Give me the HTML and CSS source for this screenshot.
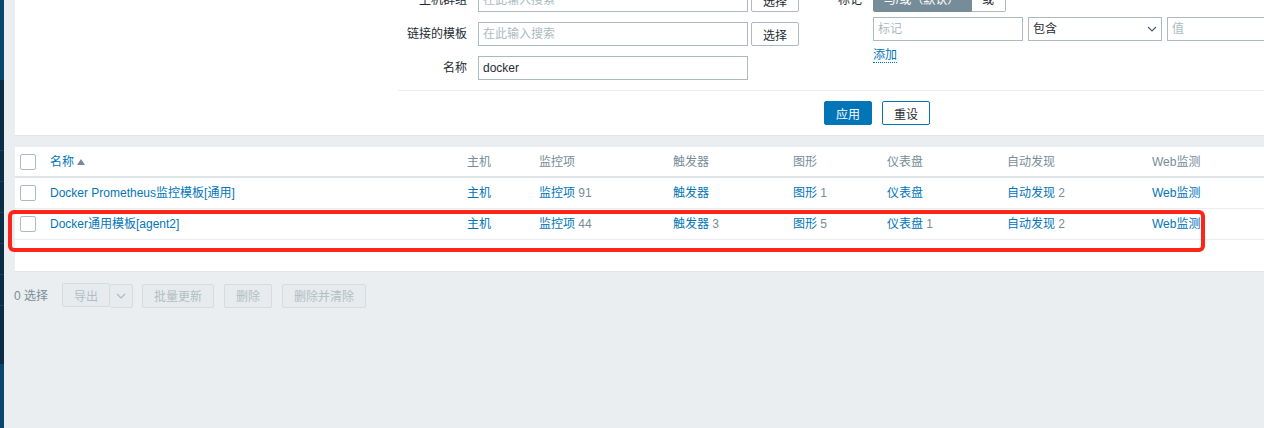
FILE: index.html
```html
<!DOCTYPE html>
<html lang="zh-CN">
<head>
    <meta charset="UTF-8">
    <meta name="viewport" content="width=device-width, initial-scale=1.0">
    <title>模板</title>
    <link rel="stylesheet" href="styles.css">
</head>
<body>
    <div class="layout">
        <aside class="sidebar">
            <div class="sidebar-menu">
                <span class="menu-spacer"></span>
                <span class="menu-item"></span>
                <span class="menu-item"></span>
                <span class="menu-item"></span>
                <span class="menu-item"></span>
                <span class="menu-item"></span>
                <span class="menu-item"></span>
            </div>
        </aside>

        <main class="content">
            <!-- Filter -->
            <section class="filter">
                <div class="filter-form">
                    <div class="filter-cols">
                        <div class="filter-col">
                            <div class="form-row">
                                <label class="form-label">主机群组</label>
                                <input class="text-input" type="text" placeholder="在此输入搜索">
                                <button class="btn-grey">选择</button>
                            </div>
                            <div class="form-row">
                                <label class="form-label">链接的模板</label>
                                <input class="text-input" type="text" placeholder="在此输入搜索">
                                <button class="btn-grey">选择</button>
                            </div>
                            <div class="form-row">
                                <label class="form-label">名称</label>
                                <input class="text-input" type="text" value="docker">
                            </div>
                        </div>

                        <div class="filter-col tags-col">
                            <div class="form-row">
                                <label class="form-label tag-label">标记</label>
                                <div class="segmented">
                                    <span class="segment active">与/或（默认）</span>
                                    <span class="segment">或</span>
                                </div>
                            </div>
                            <div class="tag-row">
                                <input class="text-input tag-input" type="text" placeholder="标记">
                                <div class="select">
                                    <span>包含</span>
                                    <svg width="10" height="6" viewBox="0 0 10 6"><path d="M1 1 L5 5 L9 1" fill="none" stroke="#4f5f68" stroke-width="1.2"/></svg>
                                </div>
                                <input class="text-input tag-input" type="text" placeholder="值">
                            </div>
                            <a class="link-add" href="#">添加</a>
                        </div>
                    </div>

                    <div class="filter-buttons">
                        <button class="btn-apply">应用</button>
                        <button class="btn-alt">重设</button>
                    </div>
                </div>
            </section>

            <!-- Template list -->
            <section class="list">
                <table class="list-table">
                    <colgroup>
                        <col style="width: 30px">
                        <col style="width: 417px">
                        <col style="width: 72px">
                        <col style="width: 134px">
                        <col style="width: 120px">
                        <col style="width: 94px">
                        <col style="width: 120px">
                        <col style="width: 145px">
                        <col>
                    </colgroup>
                    <thead>
                        <tr>
                            <th><span class="checkbox"></span></th>
                            <th><a href="#" class="sort-link">名称</a><span class="arrow-up"></span></th>
                            <th>主机</th>
                            <th>监控项</th>
                            <th>触发器</th>
                            <th>图形</th>
                            <th>仪表盘</th>
                            <th>自动发现</th>
                            <th>Web监测</th>
                        </tr>
                    </thead>
                    <tbody>
                        <tr>
                            <td><span class="checkbox"></span></td>
                            <td><a href="#">Docker Prometheus监控模板[通用]</a></td>
                            <td><a href="#">主机</a></td>
                            <td><a href="#">监控项</a> <span class="count">91</span></td>
                            <td><a href="#">触发器</a></td>
                            <td><a href="#">图形</a> <span class="count">1</span></td>
                            <td><a href="#">仪表盘</a></td>
                            <td><a href="#">自动发现</a> <span class="count">2</span></td>
                            <td><a href="#">Web监测</a></td>
                        </tr>
                        <tr>
                            <td><span class="checkbox"></span></td>
                            <td><a href="#">Docker通用模板[agent2]</a></td>
                            <td><a href="#">主机</a></td>
                            <td><a href="#">监控项</a> <span class="count">44</span></td>
                            <td><a href="#">触发器</a> <span class="count">3</span></td>
                            <td><a href="#">图形</a> <span class="count">5</span></td>
                            <td><a href="#">仪表盘</a> <span class="count">1</span></td>
                            <td><a href="#">自动发现</a> <span class="count">2</span></td>
                            <td><a href="#">Web监测</a></td>
                        </tr>
                    </tbody>
                </table>
                <div class="highlight"></div>
            </section>

            <!-- Mass actions -->
            <div class="actions">
                <span class="selected-count">0 选择</span>
                <div class="btn-split">
                    <button class="btn-disabled btn-w48">导出</button>
                    <button class="btn-disabled btn-toggle">
                        <svg width="10" height="6" viewBox="0 0 10 6"><path d="M1 1 L5 5 L9 1" fill="none" stroke="#acbbc2" stroke-width="1.2"/></svg>
                    </button>
                </div>
                <button class="btn-disabled btn-w72">批量更新</button>
                <button class="btn-disabled btn-w48">删除</button>
                <button class="btn-disabled btn-w84">删除并清除</button>
            </div>
        </main>
    </div>
</body>
</html>
```

FILE: styles.css
```css
:root {
    --bg: #ebeef0;
    --panel-border: #dfe4e7;
    --text: #1f2c33;
    --muted: #768d99;
    --link: #0275b8;
    --input-border: #acbbc2;
    --sidebar: #0a466a;
    --sidebar-dark: #0b2c43;
}

html, body {
    overflow: hidden;
}

body {
    margin: 0;
    padding: 0;
    background-color: var(--bg);
    color: var(--text);
    font-family: "Liberation Sans", Arial, "Noto Sans CJK SC", sans-serif;
    font-size: 12px;
    line-height: 14px;
}

a {
    color: var(--link);
    text-decoration: none;
}

button {
    font-family: inherit;
    font-size: 12px;
}

.layout {
    display: flex;
    min-height: 100vh;
}

/* Sidebar edge */
.sidebar {
    width: 4px;
    flex-shrink: 0;
    background-color: var(--sidebar);
}

.sidebar-menu {
    margin-top: 80px;
    background-color: var(--sidebar-dark);
    display: flex;
    flex-direction: column;
    padding-bottom: 28px;
}

.menu-spacer {
    height: 70px;
}

.menu-item {
    height: 30px;
    border-top: 1px solid #173f5c;
}

.content {
    flex: 1;
    min-width: 0;
    padding-left: 11px;
}

/* Filter */
.filter {
    margin-top: -22px;
    padding: 10px 0 10px 0;
    background-color: #fff;
    border-bottom: 1px solid var(--panel-border);
    overflow: hidden;
}

.filter-form {
    margin-left: 383px;
}

.filter-cols {
    display: flex;
    padding-bottom: 10px;
}

.filter-col {
    display: flex;
    flex-direction: column;
    gap: 10px;
    width: 422px;
    flex-shrink: 0;
}

.tags-col {
    gap: 0;
    width: 520px;
}

.form-row {
    display: flex;
    align-items: center;
    height: 24px;
}

.form-label {
    width: 69px;
    margin-right: 11px;
    text-align: right;
    flex-shrink: 0;
}

.tag-label {
    width: 42px;
}

.text-input {
    box-sizing: border-box;
    width: 270px;
    height: 24px;
    padding: 0 4px;
    border: 1px solid var(--input-border);
    border-radius: 0;
    font-family: inherit;
    font-size: 12px;
    color: var(--text);
    outline: none;
    flex-shrink: 0;
}

.text-input::placeholder {
    color: var(--input-border);
}

.btn-grey {
    box-sizing: border-box;
    height: 24px;
    width: 48px;
    margin-left: 3px;
    background-color: #fff;
    border: 1px solid var(--input-border);
    border-radius: 2px;
    color: var(--text);
    padding: 0;
}

.segmented {
    display: flex;
    height: 24px;
}

.segment {
    box-sizing: border-box;
    height: 24px;
    line-height: 22px;
    border: 1px solid var(--input-border);
    padding: 0 10px;
    background-color: #fff;
}

.segment.active {
    width: 99px;
    background-color: var(--muted);
    border-color: var(--muted);
    color: #fff;
    border-radius: 2px 0 0 2px;
}

.segment:last-child {
    width: 34px;
    border-left: none;
    border-radius: 0 2px 2px 0;
}

.tag-row {
    display: flex;
    gap: 5px;
    margin: 5px 0 0 53px;
}

.tag-input {
    width: 150px;
}

.select {
    box-sizing: border-box;
    width: 134px;
    height: 24px;
    border: 1px solid var(--input-border);
    padding: 0 4px;
    display: flex;
    align-items: center;
    justify-content: space-between;
    flex-shrink: 0;
}

.link-add {
    align-self: flex-start;
    margin: 7px 0 0 53px;
    border-bottom: 1px dotted var(--link);
    line-height: 14px;
}

.filter-buttons {
    border-top: 1px solid var(--bg);
    padding: 10px 0 0 426px;
    display: flex;
    gap: 10px;
}

.btn-apply,
.btn-alt {
    box-sizing: border-box;
    width: 48px;
    height: 24px;
    border-radius: 2px;
    padding: 0;
}

.btn-apply {
    background-color: var(--link);
    border: 1px solid var(--link);
    color: #fff;
}

.btn-alt {
    background-color: #fff;
    border: 1px solid var(--link);
    color: var(--text);
}

/* Template list */
.list {
    position: relative;
    margin-top: 11px;
    padding-bottom: 31px;
    background-color: #fff;
    border-bottom: 1px solid var(--panel-border);
}

.list-table {
    width: 100%;
    table-layout: fixed;
    border-collapse: collapse;
}

.list-table th,
.list-table td {
    padding: 0 5px;
    text-align: left;
    vertical-align: middle;
    white-space: nowrap;
}

.list-table th {
    height: 29px;
    font-weight: normal;
    color: var(--muted);
    border-bottom: 2px solid var(--panel-border);
}

.list-table td {
    height: 30px;
    border-bottom: 1px solid var(--bg);
}

.checkbox {
    display: block;
    box-sizing: border-box;
    width: 16px;
    height: 16px;
    border: 1px solid var(--input-border);
    border-radius: 2px;
    background-color: #fff;
}

.arrow-up {
    display: inline-block;
    margin-left: 3px;
    border-left: 4px solid transparent;
    border-right: 4px solid transparent;
    border-bottom: 6px solid var(--muted);
    vertical-align: 1px;
}

.count {
    color: var(--muted);
}

.highlight {
    position: absolute;
    left: -7px;
    top: 63px;
    width: 1197px;
    height: 42px;
    box-sizing: border-box;
    border: 4px solid #ff2418;
    border-radius: 6px;
    pointer-events: none;
}

/* Mass actions */
.actions {
    display: flex;
    align-items: center;
    gap: 10px;
    padding: 11px 0 0 0;
    margin-left: -1px;
}

.selected-count {
    color: var(--muted);
    margin-right: 4px;
}

.btn-split {
    display: flex;
    align-items: flex-start;
    margin-right: -1px;
}

.btn-disabled {
    box-sizing: border-box;
    height: 24px;
    padding: 0;
    background-color: #e8ebed;
    border: 1px solid #d5dbdf;
    border-radius: 2px;
    color: #b0bec4;
    flex-shrink: 0;
}

.btn-w48 {
    width: 48px;
}

.btn-w72 {
    width: 72px;
}

.btn-w84 {
    width: 84px;
}

.btn-toggle {
    width: 23px;
    margin-top: 1px;
    border-left: none;
    display: flex;
    align-items: center;
    justify-content: center;
}
```
